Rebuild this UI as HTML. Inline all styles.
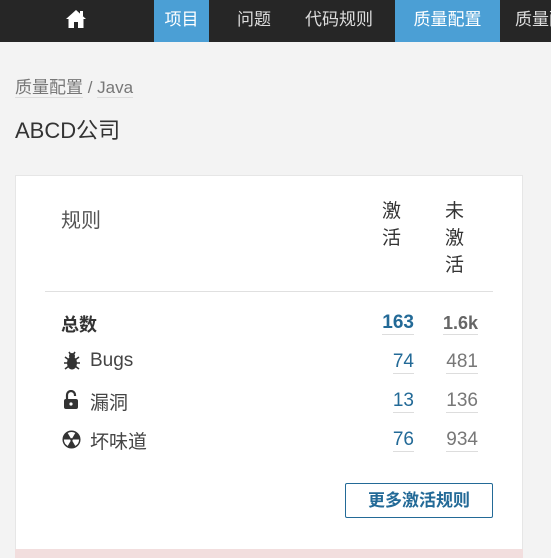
<!DOCTYPE html>
<html><head><meta charset="utf-8"><style>
*{margin:0;padding:0;box-sizing:border-box}
html,body{width:551px;height:558px;overflow:hidden}
body{background:#f3f3f3;font-family:"Liberation Sans","Noto Sans CJK SC",sans-serif;color:#444;position:relative}
.nav{position:absolute;left:0;top:0;width:551px;height:42px;background:#262626;overflow:hidden}
.nav span{position:absolute;top:0;height:42px;line-height:40px;color:#ddd;font-size:17px;white-space:nowrap}
.nav .act{background:#4b9fd5;color:#fff;text-align:center}
.a{position:absolute;white-space:nowrap}
.card{position:absolute;left:15px;top:175px;width:508px;height:383px;background:#fff;border:1px solid #e6e6e6;border-bottom:none}
.num{position:absolute;text-align:right;line-height:22px;font-size:19px}
.num span{border-bottom:1px solid #ddd;padding-bottom:1px}
</style></head><body>
<div class="nav">
<svg style="position:absolute;left:65px;top:9px" width="22" height="20" viewBox="0 0 22 20"><path d="M11 1 L1 10 L3.5 10 L3.5 19 L9 19 L9 13 L13 13 L13 19 L18.5 19 L18.5 10 L21 10 Z" fill="#fff"/><rect x="15" y="2" width="3" height="5" fill="#fff"/></svg>
<span class="act" style="left:154px;width:55px">项目</span>
<span style="left:237px">问题</span>
<span style="left:305px">代码规则</span>
<span class="act" style="left:395px;width:105px">质量配置</span>
<span style="left:515px">质量配置</span>
</div>
<div class="a" style="left:15px;top:73px;font-size:17px;color:#777"><span style="border-bottom:1px solid #ddd">质量配置</span> / <span style="border-bottom:1px solid #ddd">Java</span></div>
<div class="a" style="left:15px;top:113px;font-size:22px;color:#333">ABCD公司</div>
<div class="card"></div>
<div class="a" style="left:61px;top:204px;font-size:20px;color:#555">规则</div>
<div class="a" style="left:382px;top:198px;font-size:19px;line-height:27px;color:#333;white-space:normal;width:20px">激<br>活</div>
<div class="a" style="left:445px;top:198px;font-size:19px;line-height:27px;color:#333;white-space:normal;width:20px">未<br>激<br>活</div>
<div class="a" style="left:45px;top:291px;width:448px;height:1px;background:#e0e0e0"></div>
<div class="a" style="left:61px;top:311px;font-size:18px;font-weight:bold;color:#333">总数</div>
<div class="num" style="left:350px;top:312px;width:64px;font-weight:bold;color:#236a97"><span>163</span></div>
<div class="num" style="left:420px;top:312px;width:58px;font-weight:bold;color:#666;font-size:18px"><span>1.6k</span></div>
<svg class="a" style="left:63px;top:351px" width="18" height="20" viewBox="0 0 18 20"><ellipse cx="9" cy="12" rx="5" ry="6.5" fill="#333"/><circle cx="9" cy="5" r="3" fill="#333"/><path d="M2 6l4 3M16 6l-4 3M1 12h4M17 12h-4M2 18l4-3M16 18l-4-3M6 1l2 3M12 1l-2 3" stroke="#333" stroke-width="1.6"/></svg>
<div class="a" style="left:90px;top:350px;font-size:19px">Bugs</div>
<div class="num" style="left:350px;top:351px;width:64px;color:#236a97"><span>74</span></div>
<div class="num" style="left:420px;top:351px;width:58px;color:#777"><span>481</span></div>
<svg class="a" style="left:63px;top:390px" width="16" height="20" viewBox="0 0 16 20"><path d="M4 9V5a4 4 0 0 1 8 0v1" stroke="#333" stroke-width="2.2" fill="none"/><rect x="1" y="9" width="14" height="10" rx="2" fill="#333"/><circle cx="8" cy="14" r="1.6" fill="#fff"/></svg>
<div class="a" style="left:90px;top:388px;font-size:19px">漏洞</div>
<div class="num" style="left:350px;top:390px;width:64px;color:#236a97"><span>13</span></div>
<div class="num" style="left:420px;top:390px;width:58px;color:#777"><span>136</span></div>
<svg class="a" style="left:62px;top:430px" width="19" height="19" viewBox="0 0 20 20"><circle cx="10" cy="10" r="9.5" fill="#333"/><path d="M10 10 L6 3.2 A8 8 0 0 1 14 3.2 Z M10 10 L18 10 A8 8 0 0 1 14 16.8 Z M10 10 L6 16.8 A8 8 0 0 1 2 10 Z" fill="#fff"/><circle cx="10" cy="10" r="1.4" fill="#333"/></svg>
<div class="a" style="left:90px;top:427px;font-size:19px">坏味道</div>
<div class="num" style="left:350px;top:429px;width:64px;color:#236a97"><span>76</span></div>
<div class="num" style="left:420px;top:429px;width:58px;color:#777"><span>934</span></div>
<div class="a" style="left:345px;top:483px;width:148px;height:35px;border:1px solid #236a97;border-radius:2px;color:#236a97;font-size:17px;font-weight:bold;text-align:center;line-height:33px">更多激活规则</div>
<div class="a" style="left:15px;top:549px;width:508px;height:9px;background:#f2dede"></div>
</body></html>
